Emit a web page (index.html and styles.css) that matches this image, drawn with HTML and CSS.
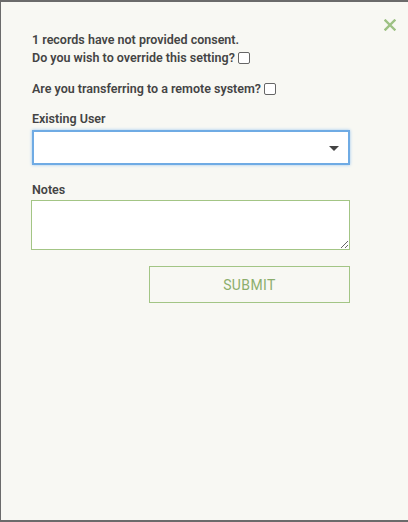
FILE: index.html
```html
<!DOCTYPE html>
<html>
<head>
<meta charset="utf-8">
<link rel="stylesheet" href="styles.css">
</head>
<body>
<div class="dialog">
  <button class="close" type="button" aria-label="Close">
    <svg width="12" height="12" viewBox="0 0 12 12"><path d="M1.5 1.5 L10.5 10.5 M10.5 1.5 L1.5 10.5" stroke="#9dc183" stroke-width="2.4" stroke-linecap="square"/></svg>
  </button>
  <form class="form">
    <div class="consent">
      <div>1 records have not provided consent.</div>
      <label class="check">Do you wish to override this setting? <input type="checkbox" class="cb"></label>
    </div>
    <label class="check remote">Are you transferring to a remote system? <input type="checkbox" class="cb"></label>
    <div class="field user">
      <label class="lbl">Existing User</label>
      <div class="select"><span class="caret"></span></div>
    </div>
    <div class="field notes-field">
      <label class="lbl">Notes</label>
      <textarea class="notes"></textarea>
    </div>
    <div class="actions">
      <button type="button" class="submit">SUBMIT</button>
    </div>
  </form>
</div>
</body>
</html>
```
FILE: styles.css
```css
html, body {
  margin: 0;
  padding: 0;
  height: 100%;
}
body {
  font-family: Roboto, "Liberation Sans", sans-serif;
  background: #f8f8f3;
}
.dialog {
  position: relative;
  box-sizing: border-box;
  height: 522px;
  border: 1px solid #6b6b6b;
  border-top-width: 2px;
  border-bottom-width: 2px;
  border-right: none;
  background: #f8f8f3;
  padding: 29px 58px 0 30px;
}
.close {
  position: absolute;
  top: 16px;
  right: 11px;
  background: none;
  border: none;
  padding: 0;
  width: 14px;
  height: 14px;
  display: flex;
  align-items: center;
  justify-content: center;
}
.form {
  display: flex;
  flex-direction: column;
  color: #444;
  font-size: 12.5px;
  font-weight: 600;
}
.consent {
  line-height: 18px;
  padding-left: 1px;
}
.check {
  display: flex;
  align-items: center;
  gap: 3px;
}
.cb {
  appearance: none;
  width: 12px;
  height: 12px;
  margin: 0;
  border: 1px solid #666;
  border-radius: 2px;
  background: #fff;
  box-sizing: border-box;
}
.remote {
  margin-top: 13px;
  line-height: 18px;
  padding-left: 1px;
}
.field {
  display: flex;
  flex-direction: column;
}
.user {
  margin-top: 12px;
}
.notes-field {
  margin-top: 16px;
}
.lbl {
  line-height: 18px;
  padding-left: 1px;
}
.select {
  box-sizing: border-box;
  height: 35px;
  margin: 2px 0 0 1px;
  border: 2px solid #6fabe4;
  box-shadow: 0 0 3px #9cc6ef;
  background: #fff;
  position: relative;
}
.caret {
  position: absolute;
  right: 9px;
  top: 14px;
  width: 0;
  height: 0;
  border-left: 5px solid transparent;
  border-right: 5px solid transparent;
  border-top: 5px solid #444;
}
.notes {
  box-sizing: border-box;
  height: 50px;
  margin: 1px 0 0 0;
  border: 1px solid #a3c585;
  background: #fff;
  resize: vertical;
  font: inherit;
}
.actions {
  display: flex;
  justify-content: flex-end;
  margin-top: 16px;
}
.submit {
  box-sizing: border-box;
  width: 201px;
  height: 37px;
  border: 1px solid #a3c585;
  background: transparent;
  color: #8cae6c;
  font-family: Roboto, "Liberation Sans", sans-serif;
  font-size: 14px;
  font-weight: 400;
  letter-spacing: 0.4px;
}
```
